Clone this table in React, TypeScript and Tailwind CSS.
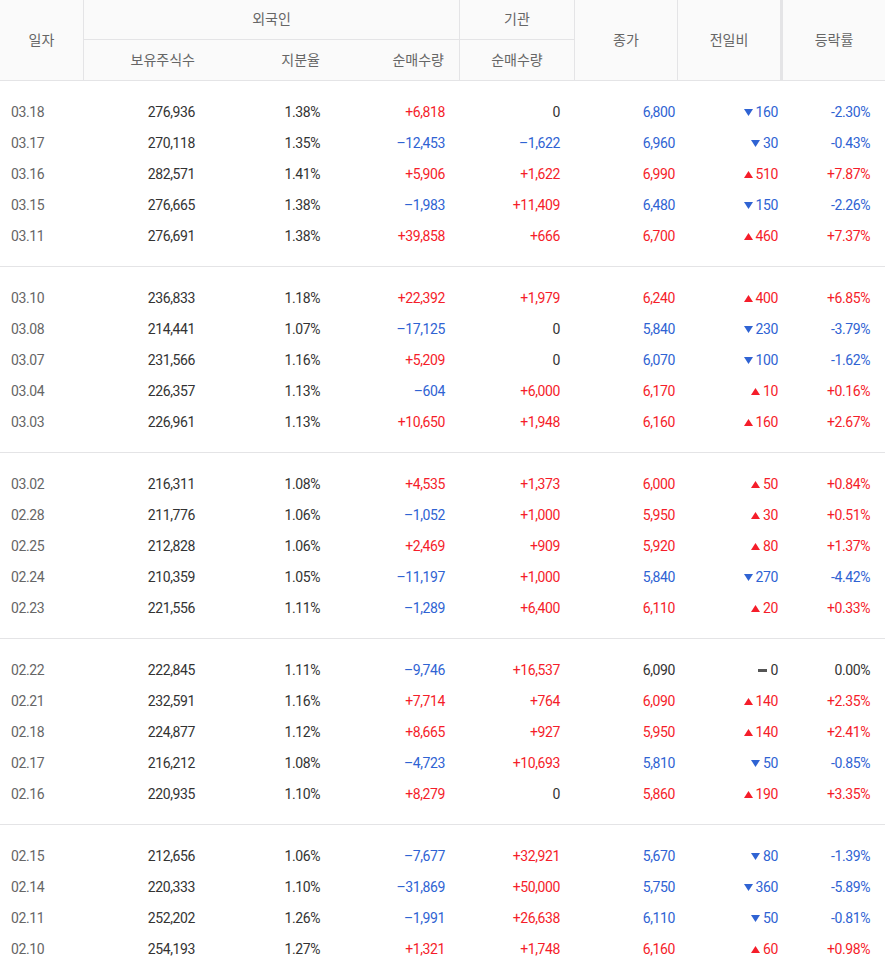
import React from "react";

type Row = [string, string, string, string, string, string, string, string];

// date, 보유주식수, 지분율, 외국인 순매수, 기관 순매수, 종가, 전일비, 등락률
const groups: Row[][] = [
  [
    ["03.18", "276,936", "1.38%", "+6,818", "0", "6,800", "-160", "-2.30%"],
    ["03.17", "270,118", "1.35%", "–12,453", "–1,622", "6,960", "-30", "-0.43%"],
    ["03.16", "282,571", "1.41%", "+5,906", "+1,622", "6,990", "+510", "+7.87%"],
    ["03.15", "276,665", "1.38%", "–1,983", "+11,409", "6,480", "-150", "-2.26%"],
    ["03.11", "276,691", "1.38%", "+39,858", "+666", "6,700", "+460", "+7.37%"],
  ],
  [
    ["03.10", "236,833", "1.18%", "+22,392", "+1,979", "6,240", "+400", "+6.85%"],
    ["03.08", "214,441", "1.07%", "–17,125", "0", "5,840", "-230", "-3.79%"],
    ["03.07", "231,566", "1.16%", "+5,209", "0", "6,070", "-100", "-1.62%"],
    ["03.04", "226,357", "1.13%", "–604", "+6,000", "6,170", "+10", "+0.16%"],
    ["03.03", "226,961", "1.13%", "+10,650", "+1,948", "6,160", "+160", "+2.67%"],
  ],
  [
    ["03.02", "216,311", "1.08%", "+4,535", "+1,373", "6,000", "+50", "+0.84%"],
    ["02.28", "211,776", "1.06%", "–1,052", "+1,000", "5,950", "+30", "+0.51%"],
    ["02.25", "212,828", "1.06%", "+2,469", "+909", "5,920", "+80", "+1.37%"],
    ["02.24", "210,359", "1.05%", "–11,197", "+1,000", "5,840", "-270", "-4.42%"],
    ["02.23", "221,556", "1.11%", "–1,289", "+6,400", "6,110", "+20", "+0.33%"],
  ],
  [
    ["02.22", "222,845", "1.11%", "–9,746", "+16,537", "6,090", "0", "0.00%"],
    ["02.21", "232,591", "1.16%", "+7,714", "+764", "6,090", "+140", "+2.35%"],
    ["02.18", "224,877", "1.12%", "+8,665", "+927", "5,950", "+140", "+2.41%"],
    ["02.17", "216,212", "1.08%", "–4,723", "+10,693", "5,810", "-50", "-0.85%"],
    ["02.16", "220,935", "1.10%", "+8,279", "0", "5,860", "+190", "+3.35%"],
  ],
  [
    ["02.15", "212,656", "1.06%", "–7,677", "+32,921", "5,670", "-80", "-1.39%"],
    ["02.14", "220,333", "1.10%", "–31,869", "+50,000", "5,750", "-360", "-5.89%"],
    ["02.11", "252,202", "1.26%", "–1,991", "+26,638", "6,110", "-50", "-0.81%"],
    ["02.10", "254,193", "1.27%", "+1,321", "+1,748", "6,160", "+60", "+0.98%"],
  ],
];

const cols = "grid grid-cols-[84px_126px_125px_125px_115px_103px_103px_104px]";

const tone = (v: string) => {
  if (v.startsWith("+")) return "text-[#f51d2a]";
  if (v.startsWith("-") || v.startsWith("–")) return "text-[#2f63d3]";
  return "text-[#333]";
};

const Change = ({ value }: { value: string }) => {
  const n = value.replace(/^[+-]/, "");
  if (value.startsWith("+")) {
    return (
      <span className="flex items-center gap-[3px] text-[#f51d2a]">
        <svg width="9" height="7" viewBox="0 0 9 7">
          <path d="M4.5 0L9 7H0z" fill="#f51d2a" />
        </svg>
        {n}
      </span>
    );
  }
  if (value.startsWith("-")) {
    return (
      <span className="flex items-center gap-[3px] text-[#2f63d3]">
        <svg width="9" height="7" viewBox="0 0 9 7">
          <path d="M0 0H9L4.5 7z" fill="#2f63d3" />
        </svg>
        {n}
      </span>
    );
  }
  return (
    <span className="flex items-center gap-[4px] text-[#333]">
      <svg width="9" height="3" viewBox="0 0 9 3">
        <rect width="9" height="3" fill="#555" />
      </svg>
      {n}
    </span>
  );
};

export default function App() {
  return (
    <div
      className="w-[885px] h-[964px] overflow-hidden bg-white text-[14px] tracking-[-0.4px]"
      style={{ fontFamily: 'Roboto, "Noto Sans CJK KR", sans-serif' }}
    >
      {/* header */}
      <div className={`${cols} grid-rows-[40px_40px] bg-[#fafafa] text-[#666] tracking-normal border-b border-[#e4e4e6]`}>
        <div className="row-span-2 flex items-center justify-center border-r border-[#e4e4e6]">일자</div>
        <div className="col-span-3 flex items-center justify-center border-r border-b border-[#e4e4e6]">외국인</div>
        <div className="flex items-center justify-center border-r border-b border-[#e4e4e6]">기관</div>
        <div className="row-span-2 flex items-center justify-center border-r border-[#e4e4e6]">종가</div>
        <div className="row-span-2 flex items-center justify-center border-r border-[#e4e4e6]">전일비</div>
        <div className="row-span-2 flex items-center justify-center border-l-2 border-[#e4e4e6]">등락률</div>
        <div className="flex items-center justify-end pr-[15px]">보유주식수</div>
        <div className="flex items-center justify-end pr-[15px]">지분율</div>
        <div className="flex items-center justify-end pr-[15px] border-r border-[#e4e4e6]">순매수량</div>
        <div className="flex items-center justify-center border-r border-[#e4e4e6]">순매수량</div>
      </div>

      {/* body */}
      {groups.map((g, gi) => (
        <div key={gi} className={`pt-[16px] pb-[14px] ${gi > 0 ? "border-t border-[#e4e4e6]" : ""}`}>
          {g.map((r) => (
            <div key={r[0]} className={`${cols} h-[31px] items-center`}>
              <div className="pl-[11px] text-[#666]">{r[0]}</div>
              <div className="text-right pr-[15px] text-[#333]">{r[1]}</div>
              <div className="text-right pr-[15px] text-[#333]">{r[2]}</div>
              <div className={`text-right pr-[15px] ${tone(r[3])}`}>{r[3]}</div>
              <div className={`text-right pr-[15px] ${tone(r[4])}`}>{r[4]}</div>
              <div className={`text-right pr-[3px] ${tone(r[6])}`}>{r[5]}</div>
              <div className="flex justify-end pr-[3px]">
                <Change value={r[6]} />
              </div>
              <div className={`text-right pr-[15px] ${tone(r[7])}`}>{r[7]}</div>
            </div>
          ))}
        </div>
      ))}
    </div>
  );
}
